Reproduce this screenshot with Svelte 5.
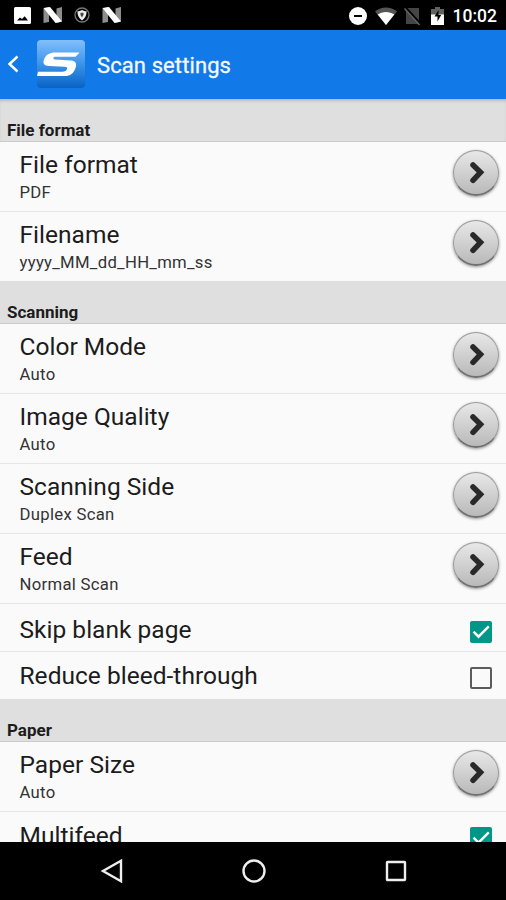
<script lang="ts">
	type Setting = {
		title: string
		value?: string
		checked?: boolean
	}

	// Settings list
	let sections: { name: string, settings: Setting[] }[] = $state([
		{
			name: 'File format',
			settings: [
				{ title: 'File format', value: 'PDF' },
				{ title: 'Filename', value: 'yyyy_MM_dd_HH_mm_ss' }
			]
		},
		{
			name: 'Scanning',
			settings: [
				{ title: 'Color Mode', value: 'Auto' },
				{ title: 'Image Quality', value: 'Auto' },
				{ title: 'Scanning Side', value: 'Duplex Scan' },
				{ title: 'Feed', value: 'Normal Scan' },
				{ title: 'Skip blank page', checked: true },
				{ title: 'Reduce bleed-through', checked: false }
			]
		},
		{
			name: 'Paper',
			settings: [
				{ title: 'Paper Size', value: 'Auto' },
				{ title: 'Multifeed', checked: true }
			]
		}
	])

	const toggle = (setting: Setting) => {
		if(setting.checked !== undefined)
			setting.checked = !setting.checked
	}
</script>


{#snippet nougat()}
	<svg width="20" height="16" viewBox="0 0 20 16">
		<path d="M.5 1.5L6 0v15L.5 16z" fill="#8d8d8d" />
		<path d="M13.5 1.5L19 0v14.5L13.5 16z" fill="#8d8d8d" />
		<path d="M.5 1L7 0 19 14.5 12.5 16z" fill="#fff" />
	</svg>
{/snippet}


<div class="screen">
	<div class="status-bar">
		<div class="notifications">
			<svg width="17" height="17" viewBox="0 0 17 17">
				<rect width="17" height="17" rx="1.5" fill="#fff" />
				<path d="M3 13.5l3-3 2 1.5 2.7-2.7 3.3 4.2z" fill="#000" />
			</svg>
			{@render nougat()}
			<svg width="16" height="16" viewBox="0 0 16 16">
				<circle cx="8" cy="8" r="7" fill="none" stroke="#777" stroke-width="1.3" />
				<path d="M8 3c1.4 1 3 1.3 4.6 1.3C12.6 8.5 11 11.5 8 13.4 5 11.5 3.4 8.5 3.4 4.3 5 4.3 6.6 4 8 3z" fill="#eee" />
				<path d="M6.5 5.8h3v2L8 10.5 6.5 8z" fill="#444" />
			</svg>
			{@render nougat()}
		</div>
		<div class="indicators">
			<svg width="18" height="18" viewBox="0 0 18 18">
				<circle cx="9" cy="9" r="9" fill="#fff" />
				<path d="M5 9h8" stroke="#000" stroke-width="2" />
			</svg>
			<svg width="22" height="18" viewBox="0 0 22 18">
				<path d="M0 4.5C6.5-.7 15.5-.7 22 4.5L11 18z" fill="#555" />
				<path d="M2.7 7.5C7.5 4 14.5 4 19.3 7.5L11 18z" fill="#fff" />
			</svg>
			<svg class="sim" width="17" height="18" viewBox="0 0 17 18">
				<path d="M2 1H15v16H2z" fill="#454545" />
				<path d="M1.5 1L16.5 17.5" stroke="#000" stroke-width="3" />
				<path d="M.5 1.5L15.5 18" stroke="#666" stroke-width="1.5" />
			</svg>
			<svg class="battery" width="13" height="18" viewBox="0 0 13 18">
				<path d="M0 2h4V0h5v2h4v6H0z" fill="#626262" />
				<path d="M0 7.5h13V18H0z" fill="#fff" />
				<path d="M7.5 3L3.5 9.5h3v5l3.7-6.5H7.5z" fill="#000" />
			</svg>
			<span class="clock">10:02</span>
		</div>
	</div>

	<header>
		<svg class="back" width="12" height="18" viewBox="0 0 12 18">
			<path d="M10.5 1.5L2.5 9l8 7.5" fill="none" stroke="#fff" stroke-width="2.5" />
		</svg>
		<svg class="logo" width="48" height="48" viewBox="0 0 48 48">
			<defs>
				<linearGradient id="logo-fill" x2="0" y2="1">
					<stop offset="0" stop-color="#82bffc" />
					<stop offset=".5" stop-color="#3c94e8" />
					<stop offset="1" stop-color="#0863c4" />
				</linearGradient>
			</defs>
			<rect width="48" height="48" rx="4" fill="url(#logo-fill)" />
			<path d="M42.5 12.5L38.5 16.8H18.5c-2.5 0-3 2.5-.5 2.8l16 1c5 .4 6 3.5 4.5 7.5-2 5.5-5 8-11 8H0l1-4.3h24c3 0 4.500-1 5-2.7.5-1.8-.5-2.3-2.5-2.4L12 26c-5-.3-6.5-2.5-5-6.5 2-5 5.5-7 11.5-7z" fill="#fff" />
		</svg>
		<h1>Scan settings</h1>
	</header>

	<main>
		{#each sections as section}
			<h2>{section.name}</h2>
			<ul>
				{#each section.settings as setting}
					<li class:compact={setting.value === undefined}>
						<button class="row" onclick={() => toggle(setting)}>
							<span class="label">
								<span class="title">{setting.title}</span>
								{#if setting.value}
									<span class="value">{setting.value}</span>
								{/if}
							</span>
							{#if setting.value}
								<span class="arrow">
									<svg width="46" height="46" viewBox="0 0 46 46">
										<path d="M20 15L27.5 22.3l-7.5 8" fill="none" stroke="#292929" stroke-width="5.5" stroke-linecap="round" />
									</svg>
								</span>
							{:else}
								<span class="checkbox" class:checked={setting.checked}>
									{#if setting.checked}
										<svg width="22" height="22" viewBox="0 0 22 22">
											<path d="M3.5 10.7l5 5L18.8 5.3" fill="none" stroke="#fff" stroke-width="2.4" />
										</svg>
									{/if}
								</span>
							{/if}
						</button>
					</li>
				{/each}
			</ul>
		{/each}
	</main>

	<nav>
		<svg width="24" height="24" viewBox="0 0 24 24">
			<path d="M21 1.8v20.4L3 12z" />
		</svg>
		<svg width="24" height="24" viewBox="0 0 24 24">
			<circle cx="12" cy="12" r="10.5" />
		</svg>
		<svg width="24" height="24" viewBox="0 0 24 24">
			<rect x="3" y="3" width="18" height="18" rx=".5" />
		</svg>
	</nav>
</div>


<style>
	:global(body) {
		margin: 0;
		background: #000;
	}

	.screen {
		display: flex;
		flex-direction: column;
		width: 506px;
		height: 900px;
		overflow: hidden;
		background: #fafafa;
		color: #1c1c1c;
		font-family: Roboto, sans-serif;
	}

	svg {
		display: block;
		flex: none;
	}

	.status-bar {
		display: flex;
		flex: none;
		justify-content: space-between;
		box-sizing: border-box;
		height: 30px;
		padding: 0 9px 0 14px;
		background: #000;
		color: #fff;
	}
	.notifications, .indicators {
		display: flex;
		align-items: center;
	}
	.notifications {
		gap: 11.5px;
	}
	.indicators {
		gap: 8px;
		padding-top: 1px;
	}
	.sim {
		margin-left: -1px;
	}
	.battery {
		margin-left: 2px;
		margin-right: 1px;
	}
	.clock {
		font-size: 17.5px;
		font-weight: 500;
		line-height: 28px;
	}

	header {
		display: flex;
		flex: none;
		align-items: center;
		box-sizing: border-box;
		height: 69px;
		padding: 0 0 1px 7px;
		background: #1179e8;
		color: #f4f8ff;
	}
	.logo {
		margin-left: 18px;
	}
	h1 {
		margin: 2px 0 0 12px;
		font-size: 22px;
		font-weight: 400;
		letter-spacing: .1px;
		-webkit-text-stroke: .3px;
	}

	main {
		flex: 1;
		min-height: 0;
		overflow: hidden;
	}

	h2 {
		box-sizing: border-box;
		height: 43px;
		margin: 0;
		padding: 21px 7px 0;
		border-bottom: 1px solid #cbcbcb;
		background: #dfdfdf;
		font-size: 17px;
		font-weight: 700;
		line-height: 20px;
	}
	h2:first-child {
		box-shadow: inset 0 3px 3px -1px #bbb;
	}

	ul {
		margin: 0;
		padding: 0;
		list-style: none;
	}
	li {
		box-sizing: border-box;
		height: 70px;
		border-bottom: 1px solid #e6e6e6;
	}
	li:last-child {
		height: 69px;
		border-bottom: 0;
	}
	li.compact {
		height: 48px;
	}
	li.compact:last-child {
		height: 47px;
	}

	.row {
		display: flex;
		align-items: center;
		justify-content: space-between;
		box-sizing: border-box;
		width: 100%;
		height: 100%;
		padding: 2px 7px 0 20px;
		border: 0;
		background: none;
		color: inherit;
		font: inherit;
		text-align: left;
	}
	.compact .row {
		padding: 4px 14px 0 20px;
	}
	.compact:last-child .row {
		padding-top: 1px;
	}
	.label {
		display: flex;
		flex-direction: column;
		margin-left: -.5px;
	}
	.title {
		font-size: 24.5px;
		line-height: 30px;
		letter-spacing: .02px;
	}
	.value {
		color: #333;
		font-size: 16.7px;
		line-height: 25px;
		letter-spacing: .3px;
	}

	.arrow {
		box-sizing: border-box;
		width: 46px;
		height: 46px;
		margin-top: -9px;
		border: 1px solid #9a9a9a;
		border-bottom: 2px solid #707070;
		border-radius: 50%;
		background: linear-gradient(#e8e8e8, #b9b9b9);
		box-shadow: 0 1px 3px rgba(0, 0, 0, .4);
	}
	.arrow svg {
		margin: -1px;
	}

	.checkbox {
		box-sizing: border-box;
		width: 22px;
		height: 22px;
		margin-top: 4px;
		border: 2px solid #5c5c5c;
		border-radius: 2px;
	}
	.checkbox.checked {
		border: 0;
		background: #009688;
	}

	nav {
		display: flex;
		flex: none;
		align-items: center;
		justify-content: center;
		gap: 118px;
		height: 58px;
		padding-left: 2px;
		background: #000;
	}
	nav svg {
		fill: none;
		stroke: #eee;
		stroke-width: 2.4;
	}
</style>
